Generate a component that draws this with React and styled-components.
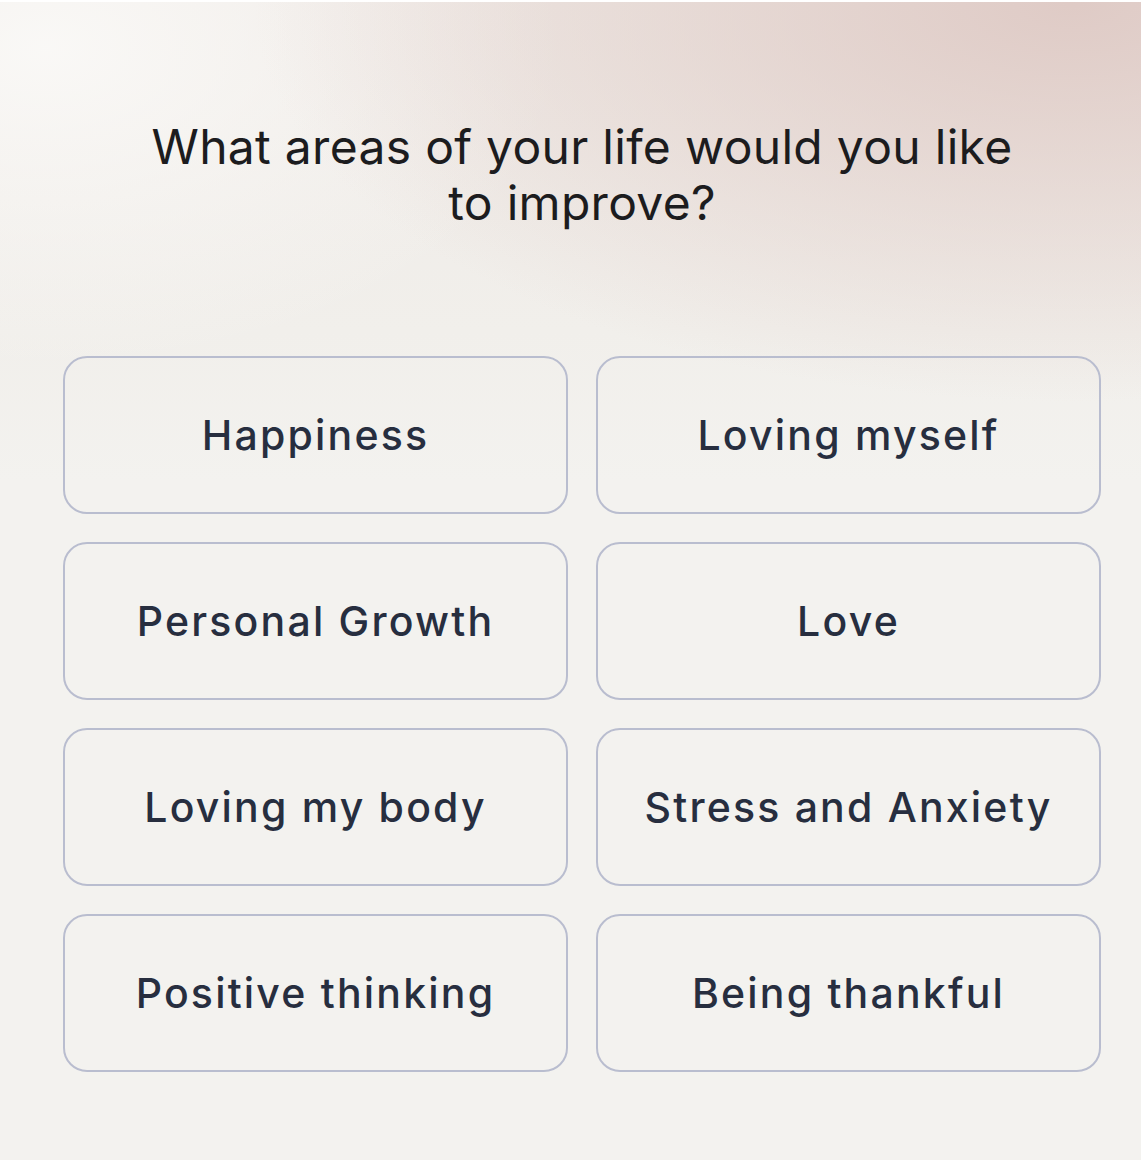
import styled, { createGlobalStyle } from "styled-components";

const GlobalStyle = createGlobalStyle`
  html, body {
    margin: 0;
    padding: 0;
    background: #ffffff;
  }
  body {
    font-family: Inter, "Noto Sans", sans-serif;
  }
`;

const Screen = styled.div`
  width: 1141px;
  height: 1158px;
  margin-top: 2px;
  box-sizing: border-box;
  padding: 0 0 0 63px;
  background:
    radial-gradient(ellipse 820px 400px at 94% 0%, rgba(222, 201, 196, 0.95), rgba(222, 201, 196, 0) 100%),
    radial-gradient(ellipse 520px 320px at 4% 4%, rgba(250, 249, 247, 0.95), rgba(250, 249, 247, 0) 100%),
    linear-gradient(180deg, #efeae6 0px, #f1efeb 330px, #f3f2ef 480px, #f3f2ef 100%);
`;

const Title = styled.h1`
  width: 1038px;
  margin: 0;
  padding: 117px 0 0;
  font-size: 48px;
  line-height: 56px;
  font-weight: 400;
  letter-spacing: 0.3px;
  color: #1c1c1e;
  text-align: center;
`;

const Options = styled.div`
  display: grid;
  grid-template-columns: repeat(2, 505px);
  grid-auto-rows: 158px;
  gap: 28px;
  margin-top: 125px;
`;

const Option = styled.button`
  display: flex;
  align-items: center;
  justify-content: center;
  box-sizing: border-box;
  border: 2px solid #b9bdcf;
  border-radius: 24px;
  background: ${(p) => (p.$selected ? "#e9e7f2" : "transparent")};
  font-family: inherit;
  font-size: 41px;
  font-weight: 500;
  letter-spacing: 2.2px;
  color: #272e3f;
  cursor: pointer;
`;

const areas = [
  "Happiness",
  "Loving myself",
  "Personal Growth",
  "Love",
  "Loving my body",
  "Stress and Anxiety",
  "Positive thinking",
  "Being thankful",
];

export default function App() {
  return (
    <>
      <GlobalStyle />
      <Screen>
        <Title>
          What areas of your life would you like
          <br />
          to improve?
        </Title>
        <Options>
          {areas.map((area) => (
            <Option key={area}>{area}</Option>
          ))}
        </Options>
      </Screen>
    </>
  );
}
